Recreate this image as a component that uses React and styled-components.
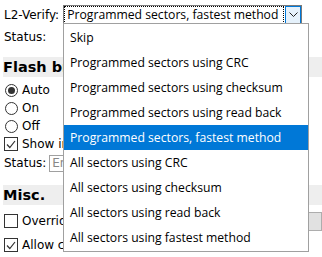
import React from 'react';
import styled, { createGlobalStyle } from 'styled-components';

const Global = createGlobalStyle`
  body {
    margin: 0;
    background: #fff;
    font-family: "DejaVu Sans", Verdana, sans-serif;
    font-size: 12px;
    color: #000;
  }
`;

const Page = styled.div`
  position: relative;
  width: 322px;
  height: 257px;
  overflow: hidden;
  padding: 5px 0 0 4px;
  box-sizing: border-box;
`;

const Row = styled.div`
  display: flex;
  align-items: center;
  height: ${p => p.h || 24}px;
  gap: ${p => p.gap || 4}px;
`;

const Label = styled.span`
  white-space: nowrap;
`;

const Select = styled.div`
  display: flex;
  flex: none;
  width: 239px;
  height: 20px;
  box-sizing: border-box;
  border: 1px solid #7a7a7a;
  font-family: "Open Sans", "Noto Sans", sans-serif;
  font-size: 12.2px;
`;

const SelectText = styled.div`
  flex: 1;
  border: 1px dotted #000;
  margin: 0 1px 0 0;
  padding-left: 2px;
  line-height: 16px;
  white-space: nowrap;
  overflow: hidden;
`;

const Arrow = styled.div`
  width: 16px;
  box-sizing: border-box;
  border: 1px solid #0078d7;
  background: #e5f1fb;
  display: flex;
  align-items: center;
  justify-content: center;
`;

const Heading = styled.div`
  background: #eeeeee;
  font-weight: bold;
  font-size: 14.5px;
  height: 20px;
  line-height: 20px;
  margin: ${p => p.m || '8px 0 4px -1px'};
  white-space: nowrap;
`;

const Radio = styled.span`
  flex: none;
  width: 11px;
  height: 11px;
  border: 1px solid #333;
  border-radius: 50%;
  display: inline-flex;
  align-items: center;
  justify-content: center;
  margin-left: 1px;
  &::after {
    content: '';
    width: 7px;
    height: 7px;
    border-radius: 50%;
    background: ${p => (p.checked ? '#333' : 'transparent')};
  }
`;

const Check = styled.span`
  flex: none;
  width: 12px;
  height: 12px;
  border: 1px solid #333;
  display: inline-flex;
  align-items: center;
  justify-content: center;
`;

const ChoiceText = styled.span`
  font-size: 12px;
  white-space: nowrap;
`;

const Input = styled.div`
  flex: none;
  border: 1px solid #a0a0a0;
  height: 17px;
  box-sizing: border-box;
  color: #888;
  padding-left: 2px;
  line-height: 15px;
  font-size: 12px;
  width: 80px;
`;

const Button = styled.div`
  flex: none;
  margin-left: auto;
  width: 60px;
  height: 19px;
  background: #e1e1e1;
  border: 1px solid #adadad;
  box-sizing: border-box;
`;

const List = styled.ul`
  position: absolute;
  left: 63px;
  top: 23px;
  width: 246px;
  margin: 0;
  padding: 1px 0;
  list-style: none;
  background: #fff;
  border: 1px solid #a0a0a0;
  box-sizing: border-box;
  font-family: "Open Sans", "Noto Sans", sans-serif;
  font-size: 12.2px;
`;

const Item = styled.li`
  height: 25px;
  line-height: 25px;
  padding-left: 6px;
  white-space: nowrap;
  background: ${p => (p.active ? '#0078d7' : 'transparent')};
  color: ${p => (p.active ? '#fff' : '#000')};
`;

const options = [
  'Skip',
  'Programmed sectors using CRC',
  'Programmed sectors using checksum',
  'Programmed sectors using read back',
  'Programmed sectors, fastest method',
  'All sectors using CRC',
  'All sectors using checksum',
  'All sectors using read back',
  'All sectors using fastest method',
];

const Tick = () => (
  <svg width="10" height="9" viewBox="0 0 10 9">
    <path d="M1 4.5 L3.8 7.5 L9 1" fill="none" stroke="#333" strokeWidth="1.2" />
  </svg>
);

export default function App() {
  const current = 4;
  return (
    <>
      <Global />
      <Page>
        <Row h={20} gap={4}>
          <Label>L2-Verify:</Label>
          <Select>
            <SelectText>{options[current]}</SelectText>
            <Arrow>
              <svg width="9" height="6" viewBox="0 0 9 6">
                <path d="M0.5 0.5 L4.5 4.5 L8.5 0.5" fill="none" stroke="#222" strokeWidth="1" />
              </svg>
            </Arrow>
          </Select>
        </Row>
        <Row h={24}>
          <Label>Status:</Label>
        </Row>
        <Heading>Flash breakpoints</Heading>
        <Row h={18}>
          <Radio checked />
          <ChoiceText>Auto</ChoiceText>
        </Row>
        <Row h={18}>
          <Radio />
          <ChoiceText>On</ChoiceText>
        </Row>
        <Row h={18}>
          <Radio />
          <ChoiceText>Off</ChoiceText>
        </Row>
        <Row h={18}>
          <Check><Tick /></Check>
          <ChoiceText>Show info window</ChoiceText>
        </Row>
        <Row h={20} gap={3}>
          <Label>Status:</Label>
          <Input>Enabled</Input>
        </Row>
        <Heading m="12px 0 4px -1px">Misc.</Heading>
        <Row h={24}>
          <Check />
          <ChoiceText>Override</ChoiceText>
          <Button />
        </Row>
        <Row h={24}>
          <Check><Tick /></Check>
          <ChoiceText>Allow caching</ChoiceText>
        </Row>
        <Row h={18}>
          <Check />
          <ChoiceText>Allow download</ChoiceText>
        </Row>
        <List>
          {options.map((o, i) => (
            <Item key={o} active={i === current}>{o}</Item>
          ))}
        </List>
      </Page>
    </>
  );
}
